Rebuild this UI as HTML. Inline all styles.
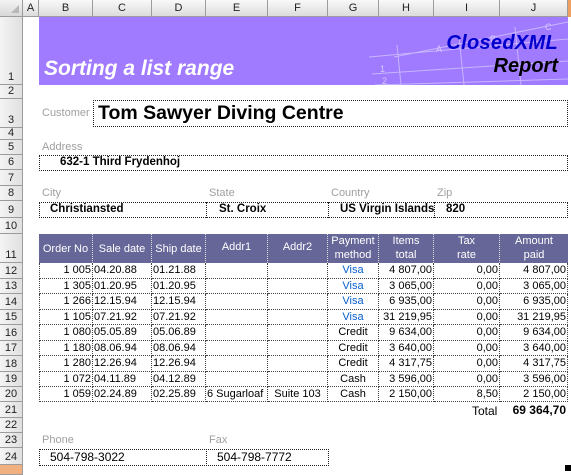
<!DOCTYPE html>
<html><head><meta charset="utf-8"><style>
*{margin:0;padding:0;box-sizing:border-box}
body{width:571px;height:471px;overflow:hidden;background:#fff;font-family:"Liberation Sans",Arial,sans-serif;font-size:11px;position:relative;color:#000}
.a{position:absolute}
.ch{position:absolute;top:0;height:17px;background:linear-gradient(#f9f9f9,#dcdcdc);border-right:1px solid #9c9c9c;border-bottom:1px solid #9c9c9c;text-align:center;line-height:16px;font-size:11px;color:#222}
.rh{position:absolute;left:0;width:23px;background:linear-gradient(90deg,#f4f4f4,#e0e0e0);border-bottom:1px solid #9c9c9c;border-right:1px solid #9c9c9c;text-align:center;font-size:11px;color:#222;display:flex;align-items:flex-end;justify-content:center;padding-bottom:1px}
.row{position:absolute;left:39px;width:529px;display:flex}
.row div{border-right:1px dotted #444;border-bottom:1px dotted #444;white-space:nowrap;overflow:hidden;padding:0 1px;line-height:14px;height:100%}
.row div:first-child{border-left:1px dotted #444}
.r{text-align:right}.c{text-align:center}
.lbl{position:absolute;color:#a0a0a0;font-size:11px}
.box{position:absolute;border:1px dotted #222}
.hd div{background:#666699;color:#fff;text-align:center;border-right:1px dotted #ddd;border-bottom:none;line-height:14px;display:flex;flex-direction:column;justify-content:flex-end;padding-bottom:1px}
.hd div.m{justify-content:center;padding-bottom:0}
.v{color:#0a5fd0}
</style></head><body>
<div class="ch" style="left:0;width:23px;background:linear-gradient(#f4f4f4,#d8d8d8)"><span style="position:absolute;right:3px;bottom:3px;width:0;height:0;border-left:8px solid transparent;border-bottom:8px solid #b8b8b8"></span></div>
<div class="ch" style="left:23px;width:16px">A</div>
<div class="ch" style="left:39px;width:54px">B</div>
<div class="ch" style="left:93px;width:59px">C</div>
<div class="ch" style="left:152px;width:54px">D</div>
<div class="ch" style="left:206px;width:62px">E</div>
<div class="ch" style="left:268px;width:60px">F</div>
<div class="ch" style="left:328px;width:51px">G</div>
<div class="ch" style="left:379px;width:55px">H</div>
<div class="ch" style="left:434px;width:66px">I</div>
<div class="ch" style="left:500px;width:68px">J</div>
<div class="ch" style="left:568px;width:3px;background:#f0a060;border:none"></div>
<div class="rh" style="top:17px;height:68px">1</div>
<div class="rh" style="top:85px;height:14px">2</div>
<div class="rh" style="top:99px;height:29px">3</div>
<div class="rh" style="top:128px;height:12px;line-height:10px">4</div>
<div class="rh" style="top:140px;height:15px">5</div>
<div class="rh" style="top:155px;height:15px">6</div>
<div class="rh" style="top:170px;height:16px">7</div>
<div class="rh" style="top:186px;height:15px">8</div>
<div class="rh" style="top:201px;height:17px">9</div>
<div class="rh" style="top:218px;height:16px">10</div>
<div class="rh" style="top:234px;height:29px">11</div>
<div class="rh" style="top:263px;height:16px">12</div>
<div class="rh" style="top:279px;height:15px">13</div>
<div class="rh" style="top:294px;height:16px">14</div>
<div class="rh" style="top:310px;height:15px">15</div>
<div class="rh" style="top:325px;height:16px">16</div>
<div class="rh" style="top:341px;height:15px">17</div>
<div class="rh" style="top:356px;height:16px">18</div>
<div class="rh" style="top:372px;height:15px">19</div>
<div class="rh" style="top:387px;height:15px">20</div>
<div class="rh" style="top:402px;height:16px">21</div>
<div class="rh" style="top:418px;height:15px">22</div>
<div class="rh" style="top:433px;height:15px">23</div>
<div class="rh" style="top:448px;height:17px">24</div>
<div class="rh" style="top:465px;height:10px;background:#f0b080"></div>

<div class="a" style="left:39px;top:17px;width:529px;height:68px;background:#a07aff;overflow:hidden">
<svg class="a" style="left:0;top:0" width="529" height="68">
<g stroke="#c8b6ff" stroke-width="1" fill="none">
<line x1="330" y1="40" x2="529" y2="22"/>
<line x1="333" y1="57" x2="529" y2="44"/>
<line x1="336" y1="68" x2="529" y2="62"/>
<line x1="358" y1="28" x2="362" y2="68"/>
<line x1="420" y1="20" x2="425" y2="68"/>
<line x1="476" y1="10" x2="482" y2="68"/>
<line x1="355" y1="40" x2="529" y2="5"/>
</g>
<g fill="#d6c8ff" font-family="Liberation Sans" font-size="9">
<text x="341" y="55">1</text><text x="343" y="67">2</text>
<text x="397" y="35">A</text><text x="451" y="25">B</text><text x="506" y="13">C</text>
</g>
</svg>
<div class="a" style="left:5px;top:40px;color:#fff;font-size:21px;font-weight:bold;font-style:italic">Sorting a list range</div>
<div class="a" style="right:10px;top:15px;color:#0000cc;font-size:20px;font-weight:bold;font-style:italic;letter-spacing:0.3px">ClosedXML</div>
<div class="a" style="right:10px;top:38px;color:#000;font-size:20px;font-weight:bold;font-style:italic">Report</div>
</div>

<div class="lbl" style="left:42px;top:107px">Customer</div>
<div class="box" style="left:93px;top:100px;width:475px;height:27px"></div>
<div class="a" style="left:98px;top:102px;font-size:19.5px;font-weight:bold">Tom Sawyer Diving Centre</div>

<div class="lbl" style="left:42px;top:141px">Address</div>
<div class="box" style="left:39px;top:155px;width:529px;height:16px"></div>
<div class="a" style="left:60px;top:156px;font-weight:bold;font-size:11.5px">632-1 Third Frydenhoj</div>

<div class="lbl" style="left:42px;top:187px">City</div>
<div class="lbl" style="left:209px;top:187px">State</div>
<div class="lbl" style="left:331px;top:187px">Country</div>
<div class="lbl" style="left:437px;top:187px">Zip</div>
<div class="box" style="left:39px;top:202px;width:529px;height:16px"></div>
<div class="a" style="left:206px;top:202px;height:16px;border-left:1px dotted #222"></div>
<div class="a" style="left:328px;top:202px;height:16px;border-left:1px dotted #222"></div>
<div class="a" style="left:434px;top:202px;height:16px;border-left:1px dotted #222"></div>
<div class="a" style="left:50px;top:203px;font-weight:bold;font-size:11.5px">Christiansted</div>
<div class="a" style="left:219px;top:203px;font-weight:bold;font-size:11.5px">St. Croix</div>
<div class="a" style="left:340px;top:203px;font-weight:bold;font-size:11.5px;width:94px;overflow:hidden;white-space:nowrap">US Virgin Islands</div>
<div class="a" style="left:446px;top:203px;font-weight:bold;font-size:11.5px">820</div>

<div class="row hd" style="top:234px;height:29px">
<div class="m" style="width:54px;border-left:none">Order No</div><div class="m" style="width:59px">Sale date</div><div class="m" style="width:54px">Ship date</div><div class="m" style="width:62px;padding-bottom:3px">Addr1</div><div class="m" style="width:60px;padding-bottom:3px">Addr2</div><div style="width:51px">Payment<br>method</div><div style="width:55px">Items<br>total</div><div style="width:66px">Tax<br>rate</div><div style="width:68px;border-right:none">Amount<br>paid</div>
</div>

<div class="row" style="top:263px;height:16px"><div class="r" style="width:54px">1 005</div><div style="width:59px">04.20.88</div><div style="width:54px">01.21.88</div><div style="width:62px"></div><div style="width:60px"></div><div class="c v" style="width:51px">Visa</div><div class="r" style="width:55px">4 807,00</div><div class="r" style="width:66px">0,00</div><div class="r" style="width:68px">4 807,00</div></div>
<div class="row" style="top:279px;height:15px"><div class="r" style="width:54px">1 305</div><div style="width:59px">01.20.95</div><div style="width:54px">01.20.95</div><div style="width:62px"></div><div style="width:60px"></div><div class="c v" style="width:51px">Visa</div><div class="r" style="width:55px">3 065,00</div><div class="r" style="width:66px">0,00</div><div class="r" style="width:68px">3 065,00</div></div>
<div class="row" style="top:294px;height:16px"><div class="r" style="width:54px">1 266</div><div style="width:59px">12.15.94</div><div style="width:54px">12.15.94</div><div style="width:62px"></div><div style="width:60px"></div><div class="c v" style="width:51px">Visa</div><div class="r" style="width:55px">6 935,00</div><div class="r" style="width:66px">0,00</div><div class="r" style="width:68px">6 935,00</div></div>
<div class="row" style="top:310px;height:15px"><div class="r" style="width:54px">1 105</div><div style="width:59px">07.21.92</div><div style="width:54px">07.21.92</div><div style="width:62px"></div><div style="width:60px"></div><div class="c v" style="width:51px">Visa</div><div class="r" style="width:55px">31 219,95</div><div class="r" style="width:66px">0,00</div><div class="r" style="width:68px">31 219,95</div></div>
<div class="row" style="top:325px;height:16px"><div class="r" style="width:54px">1 080</div><div style="width:59px">05.05.89</div><div style="width:54px">05.06.89</div><div style="width:62px"></div><div style="width:60px"></div><div class="c" style="width:51px">Credit</div><div class="r" style="width:55px">9 634,00</div><div class="r" style="width:66px">0,00</div><div class="r" style="width:68px">9 634,00</div></div>
<div class="row" style="top:341px;height:15px"><div class="r" style="width:54px">1 180</div><div style="width:59px">08.06.94</div><div style="width:54px">08.06.94</div><div style="width:62px"></div><div style="width:60px"></div><div class="c" style="width:51px">Credit</div><div class="r" style="width:55px">3 640,00</div><div class="r" style="width:66px">0,00</div><div class="r" style="width:68px">3 640,00</div></div>
<div class="row" style="top:356px;height:16px"><div class="r" style="width:54px">1 280</div><div style="width:59px">12.26.94</div><div style="width:54px">12.26.94</div><div style="width:62px"></div><div style="width:60px"></div><div class="c" style="width:51px">Credit</div><div class="r" style="width:55px">4 317,75</div><div class="r" style="width:66px">0,00</div><div class="r" style="width:68px">4 317,75</div></div>
<div class="row" style="top:372px;height:15px"><div class="r" style="width:54px">1 072</div><div style="width:59px">04.11.89</div><div style="width:54px">04.12.89</div><div style="width:62px"></div><div style="width:60px"></div><div class="c" style="width:51px">Cash</div><div class="r" style="width:55px">3 596,00</div><div class="r" style="width:66px">0,00</div><div class="r" style="width:68px">3 596,00</div></div>
<div class="row" style="top:387px;height:15px"><div class="r" style="width:54px">1 059</div><div style="width:59px">02.24.89</div><div style="width:54px">02.25.89</div><div style="width:62px">6 Sugarloaf</div><div class="c" style="width:60px">Suite 103</div><div class="c" style="width:51px">Cash</div><div class="r" style="width:55px">2 150,00</div><div class="r" style="width:66px">8,50</div><div class="r" style="width:68px">2 150,00</div></div>

<div class="a" style="left:472px;top:404px;font-size:12px">Total</div>
<div class="a" style="right:5px;top:403px;font-size:12px;font-weight:bold">69 364,70</div>

<div class="lbl" style="left:42px;top:434px">Phone</div>
<div class="lbl" style="left:209px;top:434px">Fax</div>
<div class="box" style="left:39px;top:449px;width:290px;height:17px"></div>
<div class="a" style="left:206px;top:449px;height:17px;border-left:1px dotted #222"></div>
<div class="a" style="left:50px;top:450px;font-size:12px">504-798-3022</div>
<div class="a" style="left:217px;top:450px;font-size:12px">504-798-7772</div>

<div class="a" style="left:565px;top:465px;width:6px;height:6px;background:#000"></div>
</body></html>
